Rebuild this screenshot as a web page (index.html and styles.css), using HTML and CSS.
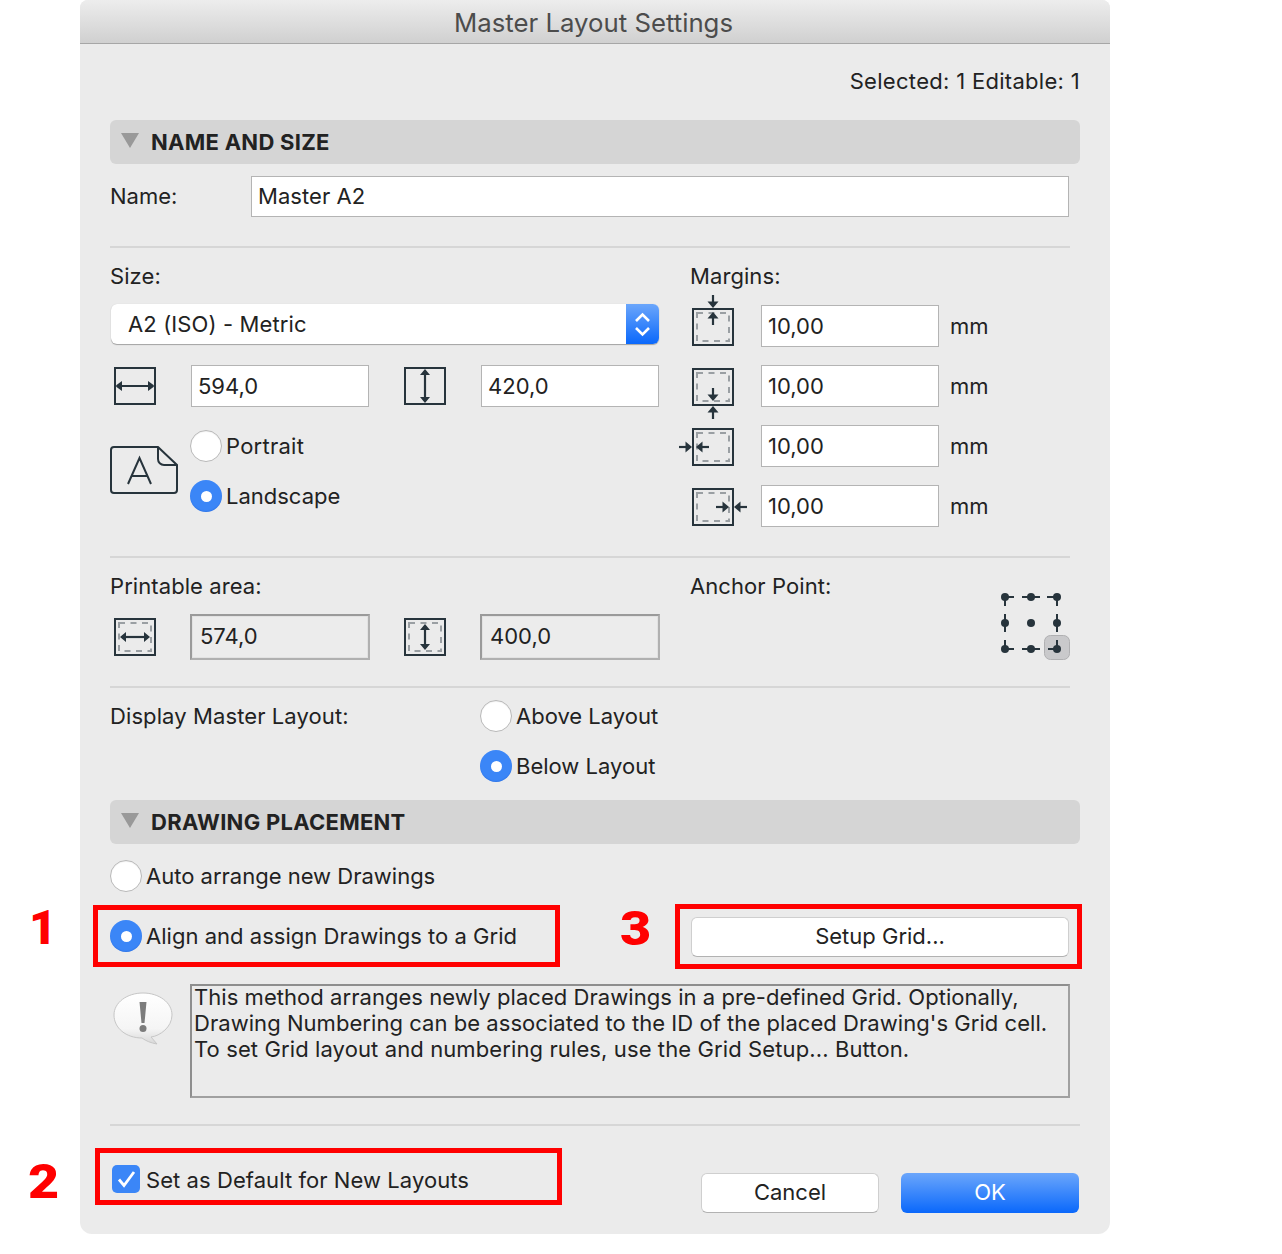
FILE: index.html
```html
<!DOCTYPE html>
<html lang="en">
<head>
<meta charset="utf-8">
<title>Master Layout Settings</title>
<link rel="stylesheet" href="styles.css">
</head>
<body>
<svg class="defs" width="0" height="0" aria-hidden="true">
  <defs>
    <g id="arrow-h"><path d="M4 19H38" stroke="#27343c" stroke-width="2.200" fill="none"/><path d="M2 19L2.500 18L8 14V24L2.500 20ZM40 19L39.500 18L34 14V24L39.500 20Z" fill="#27343c"/></g>
    <g id="arrow-v"><path d="M21 4V34" stroke="#27343c" stroke-width="2.200" fill="none"/><path d="M21 2L16 8H26ZM21 36L16 30H26Z" fill="#27343c"/></g>
    <rect id="frame" x="1" y="1" width="40" height="36" fill="none" stroke="#27343c" stroke-width="2"/>
    <rect id="dash" x="5" y="5" width="32" height="28" fill="none" stroke="#9a9fa3" stroke-width="2" stroke-dasharray="6 5.500"/>
    <g id="down"><path d="M0 -12V-3" stroke="#27343c" stroke-width="2.200"/><path d="M0 1L-5.500 -5.500H5.500Z" fill="#27343c"/></g>
    <g id="right"><path d="M-12 0H-3" stroke="#27343c" stroke-width="2.200"/><path d="M1 0L-5.500 -5.500V5.500Z" fill="#27343c"/></g>
    <circle id="dot" r="4" fill="#27343c"/>
  </defs>
</svg>
<div class="page">
  <main class="dialog">
    <header class="titlebar">Master Layout Settings</header>
    <div class="content">
      <div class="selected">Selected: 1 Editable: 1</div>

      <div class="section-head first"><span class="tri"></span>NAME AND SIZE</div>
      <div class="name-row">
        <span class="name-label">Name:</span>
        <div class="field name-field">Master A2</div>
      </div>
      <div class="rule rule-a"></div>

      <div class="split">
        <div class="col">
          <div class="label">Size:</div>
          <div class="select">
            <span class="select-text">A2 (ISO) - Metric</span>
            <span class="stepper">
              <svg width="33" height="40" viewBox="0 0 33 40"><path d="M10 17L16.500 10.500L23 17M10 24L16.500 30.500L23 24" fill="none" stroke="#fff" stroke-width="2.600"/></svg>
            </span>
          </div>
          <div class="dims">
            <svg class="ico" width="42" height="38" viewBox="0 0 42 38"><use href="#frame"/><use href="#arrow-h"/></svg>
            <div class="field dim">594,0</div>
            <svg class="ico" width="42" height="38" viewBox="0 0 42 38"><use href="#frame"/><use href="#arrow-v"/></svg>
            <div class="field dim">420,0</div>
          </div>
          <div class="orient">
            <svg class="page-ico" width="68" height="48" viewBox="0 0 68 48"><path d="M4 1H48L67 19V44A3 3 0 0 1 64 47H4A3 3 0 0 1 1 44V4A3 3 0 0 1 4 1Z" fill="none" stroke="#27343c" stroke-width="2"/><path d="M48 1V13A6 6 0 0 0 54 19H67" fill="none" stroke="#27343c" stroke-width="2"/><path d="M18 38L29.500 12L41 38M22 30H37" fill="none" stroke="#27343c" stroke-width="2"/></svg>
            <div class="radios">
              <div class="radio-row wide"><span class="radio"></span>Portrait</div>
              <div class="radio-row"><span class="radio on"></span>Landscape</div>
            </div>
          </div>
        </div>
        <div class="col">
          <div class="label">Margins:</div>
          <div class="margins">
            <div class="margin-row">
              <svg class="ico-m" width="42" height="38" viewBox="0 0 42 38"><use href="#frame"/><use href="#dash"/><use href="#down" x="21" y="-1"/><use href="#down" transform="translate(21 5) rotate(180)"/></svg>
              <div class="field dim">10,00</div><span class="unit">mm</span>
            </div>
            <div class="margin-row">
              <svg class="ico-m" width="42" height="38" viewBox="0 0 42 38"><use href="#frame"/><use href="#dash"/><use href="#down" x="21" y="32"/><use href="#down" transform="translate(21 39) rotate(180)"/></svg>
              <div class="field dim">10,00</div><span class="unit">mm</span>
            </div>
            <div class="margin-row">
              <svg class="ico-m" width="42" height="38" viewBox="0 0 42 38"><use href="#frame"/><use href="#dash"/><use href="#right" x="-1" y="19"/><use href="#right" transform="translate(5 19) rotate(180)"/></svg>
              <div class="field dim">10,00</div><span class="unit">mm</span>
            </div>
            <div class="margin-row">
              <svg class="ico-m" width="42" height="38" viewBox="0 0 42 38"><use href="#frame"/><use href="#dash"/><use href="#right" x="36" y="19"/><use href="#right" transform="translate(43 19) rotate(180)"/></svg>
              <div class="field dim">10,00</div><span class="unit">mm</span>
            </div>
          </div>
        </div>
      </div>
      <div class="rule rule-b"></div>

      <div class="split print">
        <div class="col">
          <div class="label">Printable area:</div>
          <div class="dims area">
            <svg class="ico" width="42" height="38" viewBox="0 0 42 38"><use href="#frame"/><use href="#dash"/><path d="M8 19H34" stroke="#27343c" stroke-width="2.200"/><path d="M6 19L12 14V24ZM36 19L30 14V24Z" fill="#27343c"/></svg>
            <div class="field readonly">574,0</div>
            <svg class="ico" width="42" height="38" viewBox="0 0 42 38"><use href="#frame"/><use href="#dash"/><path d="M21 8V30" stroke="#27343c" stroke-width="2.200"/><path d="M21 6L16 12H26ZM21 32L16 26H26Z" fill="#27343c"/></svg>
            <div class="field readonly">400,0</div>
          </div>
        </div>
        <div class="col anchor-col">
          <div class="label">Anchor Point:</div>
          <svg class="anchor" width="70" height="70" viewBox="0 0 70 70">
            <rect x="44.500" y="45.500" width="25" height="24" rx="6" fill="#c9c9cb" stroke="#b0b0b2"/>
            <path d="M5 7H14M5 7V16M22 7H40M47 7H57M57 7V16M5 24V42M57 24V42M5 59V50M5 59H14M22 59H40M48 59H57M57 59V50" stroke="#27343c" stroke-width="2" fill="none"/>
            <use href="#dot" x="5" y="7"/><use href="#dot" x="31" y="7"/><use href="#dot" x="57" y="7"/>
            <use href="#dot" x="5" y="33"/><use href="#dot" x="31" y="33"/><use href="#dot" x="57" y="33"/>
            <use href="#dot" x="5" y="59"/><use href="#dot" x="31" y="59"/><use href="#dot" x="57" y="59"/>
          </svg>
        </div>
      </div>
      <div class="rule rule-c"></div>

      <div class="display">
        <div class="display-label">Display Master Layout:</div>
        <div class="radios">
          <div class="radio-row"><span class="radio"></span>Above Layout</div>
          <div class="radio-row"><span class="radio on"></span>Below Layout</div>
        </div>
      </div>

      <div class="section-head second"><span class="tri"></span>DRAWING PLACEMENT</div>
      <div class="radio-row auto"><span class="radio"></span>Auto arrange new Drawings</div>
      <div class="align-row">
        <div class="radio-row align"><span class="radio on"></span>Align and assign Drawings to a Grid</div>
        <div class="btn setup">Setup Grid...</div>
      </div>
      <div class="message">
        <svg class="bubble" width="60" height="54" viewBox="0 0 60 54">
          <defs>
            <linearGradient id="bub" x1="0" y1="0" x2="0" y2="1"><stop offset="0" stop-color="#fff"/><stop offset="0.7" stop-color="#f5f5f5"/><stop offset="1" stop-color="#d8d8d8"/></linearGradient>
          </defs>
          <path d="M30 1C46 1 59 10.500 59 23C59 35 47 44 38 45L44 52C38 51 33 49 29 46C13 46 1 36 1 23C1 10.500 14 1 30 1Z" fill="url(#bub)" stroke="#c6c6c6"/>
          <path d="M26.500 10H33.500L31.500 31H28.500Z" fill="#7c7c7c"/><circle cx="30" cy="36.500" r="3.500" fill="#7c7c7c"/>
        </svg>
        <div class="message-box"><p class="message-text">This method arranges newly placed Drawings in a pre-defined Grid. Optionally,<br>Drawing Numbering can be associated to the ID of the placed Drawing's Grid cell.<br><span class="last-line">To set Grid layout and numbering rules, use the Grid Setup... Button.</span></p></div>
      </div>
      <div class="rule rule-d"></div>
      <div class="footer">
        <div class="check-row">
          <span class="check"><svg width="28" height="28" viewBox="0 0 28 28"><path d="M7 14.500L12 20.500L22 7" fill="none" stroke="#fff" stroke-width="2.800"/></svg></span>Set as Default for New Layouts
        </div>
        <div class="actions">
          <div class="btn cancel">Cancel</div>
          <div class="btn ok">OK</div>
        </div>
      </div>
    </div>
  </main>
  <div class="mark box-1"></div>
  <div class="mark box-2"></div>
  <div class="mark box-3"></div>
  <span class="num num-1">1</span>
  <span class="num num-2">2</span>
  <span class="num num-3">3</span>
</div>
</body>
</html>
```

FILE: styles.css
```css
* { box-sizing: border-box; }
html, body { margin: 0; padding: 0; background: #fff; }
body { font-family: Inter, "Noto Sans", sans-serif; font-size: 22px; color: #222; line-height: 24px; }
.defs { position: absolute; }
.page { position: relative; width: 1282px; height: 1254px; padding-left: 80px; }
.dialog { width: 1030px; height: 1234px; background: #ebebeb; border-radius: 8px 8px 12px 12px; overflow: hidden; }
.titlebar { height: 44px; background: linear-gradient(#ededed, #d0d0d0); border-bottom: 1px solid #a6a6a6; text-align: center; color: #4c4c4c; font-size: 25.760px; line-height: 46px; padding-right: 3px; }
.content { padding: 0 30px; }
.selected { margin-top: 25px; text-align: right; letter-spacing: .3px; }
.section-head { height: 44px; background: #d5d5d5; border-radius: 6px; font-weight: 700; line-height: 44px; display: flex; align-items: center; letter-spacing: .28px; }
.section-head.first { margin-top: 27px; }
.section-head.second { margin-top: 18px; }
.tri { width: 0; height: 0; border-left: 9px solid transparent; border-right: 9px solid transparent; border-top: 15px solid #999; margin: -3px 12px 0 11px; }
.name-row { display: flex; align-items: center; margin-top: 12px; height: 41px; }
.name-label { width: 141px; padding-bottom: 2px; }
.field { background: #fff; border: 1px solid #b4b4b4; padding-left: 6px; display: flex; align-items: center; height: 42px; }
.name-field { width: 818px; height: 41px; padding-bottom: 2px; letter-spacing: .05px; }
.rule { height: 2px; background: #d6d6d6; width: 960px; }
.rule-a { margin-top: 29px; }
.rule-b { margin-top: 29px; }
.rule-c { margin-top: 26px; }
.rule-d { margin-top: 26px; width: 970px; }
.split { display: grid; grid-template-columns: 550px 390px; column-gap: 30px; }
.label { margin-top: 16px; letter-spacing: .08px; }
.select { display: flex; align-items: center; justify-content: space-between; height: 40px; width: 548px; margin: 16px 0 0 1px; background: #fff; border-radius: 6px; box-shadow: 0 1px 1px rgba(0,0,0,.3), 0 0 1px rgba(0,0,0,.15); overflow: hidden; }
.select-text { padding-left: 17px; letter-spacing: .12px; }
.stepper { width: 33px; height: 40px; background: linear-gradient(#6ba6fb, #0a68fb); }
.stepper svg { display: block; }
.dims { display: flex; align-items: center; column-gap: 35px; margin-top: 21px; padding-left: 4px; }
.dim { width: 178px; }
.ico, .ico-m, .bubble, .anchor, .page-ico { flex: none; overflow: visible; }
.orient { display: flex; margin-top: 23px; }
.page-ico { margin: 16px 12px 0 0; }
.radios { display: flex; flex-direction: column; row-gap: 18px; }
.radio-row { display: flex; align-items: center; column-gap: 4px; height: 32px; }
.radio-row.wide { letter-spacing: .25px; }
.radio { width: 32px; height: 32px; border-radius: 50%; background: #fff; border: 1px solid #b8b8b8; box-shadow: inset 0 1px 1px rgba(0,0,0,.06); flex: none; position: relative; }
.radio.on { background: #3b86f7; border: none; box-shadow: inset 0 -1px 1px rgba(0,60,180,.2); }
.radio.on::after { content: ""; position: absolute; left: 10.500px; top: 10.500px; width: 11px; height: 11px; border-radius: 50%; background: #fff; }
.margins { display: flex; flex-direction: column; row-gap: 18px; margin-top: 17px; }
.margin-row { display: flex; align-items: center; padding-left: 2px; height: 42px; }
.ico-m { margin: 1px 27px 0 0; }
.unit { margin-left: 11px; }
.dims.area { margin-top: 16px; column-gap: 34px; height: 46px; }
.readonly { width: 180px; height: 46px; background: #ececec; border: 2px solid #9a9a9a; border-bottom-color: #b0b0b0; border-right-color: #b0b0b0; box-shadow: inset 0 0 0 1px #e2e2e2; padding: 0 0 2px 8px; }
.anchor-col { display: flex; justify-content: space-between; align-items: flex-start; padding-right: 10px; }
.anchor { margin-top: 32px; }
.display { display: flex; margin-top: 12px; }
.display-label { width: 370px; line-height: 32px; letter-spacing: .1px; }
.radio-row.auto { margin-top: 16px; }
.align-row { display: flex; justify-content: space-between; align-items: flex-start; margin-top: 25px; }
.radio-row.align { margin-top: 3px; letter-spacing: .03px; }
.btn { display: flex; align-items: center; justify-content: center; height: 40px; padding-bottom: 2px; border-radius: 6px; background: #fff; border: 1px solid #cfcfcf; border-bottom-color: #b2b2b2; }
.setup { width: 378px; margin-right: 11px; }
.message { display: flex; margin-top: 27px; padding-left: 3px; }
.bubble { margin: 8px 17px 0 0; }
.message-box { width: 880px; height: 114px; border: 2px solid #8e8e8e; border-bottom-color: #a0a0a0; border-right-color: #a0a0a0; padding: 0 0 0 2px; white-space: nowrap; }
.message-text { margin: -2px 0 0; line-height: 26px; letter-spacing: .05px; }
.last-line { letter-spacing: .11px; }
.footer { display: flex; justify-content: space-between; align-items: flex-start; padding-top: 40px; }
.check-row { display: flex; align-items: center; column-gap: 6px; height: 28px; padding-left: 2px; letter-spacing: .07px; }
.check { width: 28px; height: 28px; margin-bottom: 2px; border-radius: 5px; background: #3b86f7; flex: none; }
.check svg { display: block; }
.actions { display: flex; column-gap: 22px; margin-top: 7px; padding-right: 1px; }
.cancel { width: 178px; }
.ok { width: 178px; color: #fff; background: linear-gradient(#6ba6fb, #0a68fb); border: none; }
.mark { position: absolute; border: 5px solid #f00; }
.box-1 { left: 93px; top: 905px; width: 467px; height: 62px; }
.box-2 { left: 95px; top: 1148px; width: 467px; height: 57px; }
.box-3 { left: 675px; top: 904px; width: 407px; height: 65px; }
.num { position: absolute; color: #f00; font-family: Roboto, sans-serif; font-weight: 900; font-size: 48px; line-height: 48px; transform-origin: left center; }
.num-1 { left: 29px; top: 904px; }
.num-2 { left: 28px; top: 1158px; transform: scaleX(1.12); }
.num-3 { left: 620px; top: 905px; transform: scaleX(1.12); }
```
